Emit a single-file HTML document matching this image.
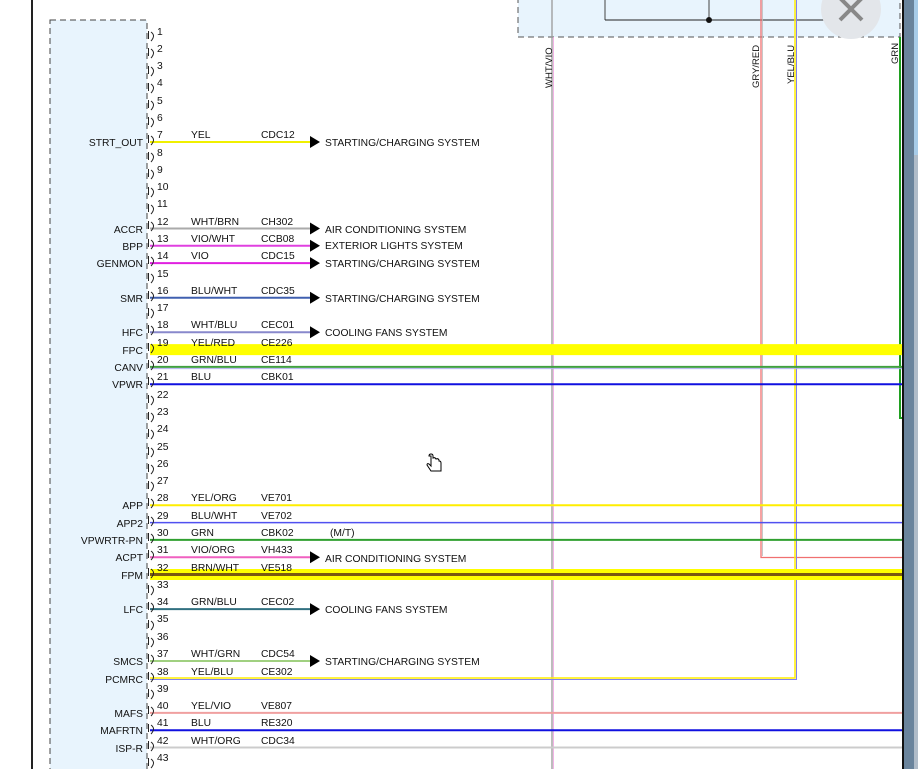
<!DOCTYPE html>
<html><head><meta charset="utf-8"><style>
html,body{margin:0;padding:0;background:#fff;overflow:hidden}
svg{display:block}
text{font-family:"Liberation Sans",sans-serif;font-size:10.3px;fill:#111}
</style></head><body>
<svg width="918" height="769" viewBox="0 0 918 769" xmlns="http://www.w3.org/2000/svg">
<rect x="0" y="0" width="918" height="769" fill="#fff"/>
<rect x="31" y="0" width="2" height="769" fill="#222"/>
<rect x="50" y="20" width="97" height="760" fill="#e8f4fd" stroke="#444" stroke-dasharray="6,4"/>
<rect x="518" y="-5" width="382" height="42" fill="#e8f4fd" stroke="#555" stroke-dasharray="6,4"/>
<line x1="605" y1="0" x2="605" y2="20" stroke="#444"/>
<line x1="605" y1="20" x2="848" y2="20" stroke="#222"/>
<line x1="709" y1="0" x2="709" y2="20" stroke="#444"/>
<circle cx="709" cy="20" r="3" fill="#111"/>
<circle cx="851" cy="9" r="30" fill="#e3e6ea"/>
<path d="M840 -2 L862 20 M862 -2 L840 20" stroke="#888" stroke-width="4"/>
<line x1="552" y1="0" x2="552" y2="769" stroke="#999" stroke-width="1.3"/>
<line x1="553.5" y1="37" x2="553.5" y2="769" stroke="#f0a0e0" stroke-width="0.8"/>
<polyline points="761,0 761,557.5 902,557.5" fill="none" stroke="#f07070" stroke-width="1.3"/>
<polyline points="762.5,0 762.5,556" fill="none" stroke="#bbb" stroke-width="0.8"/>
<polyline points="795,0 795,678 150,678" fill="none" stroke="#ffee00" stroke-width="1.5"/>
<polyline points="796.5,0 796.5,679.5 150,679.5" fill="none" stroke="#8080f0" stroke-width="1"/>
<polyline points="900,37 900,418 902,418" fill="none" stroke="#20a020" stroke-width="2"/>
<text transform="translate(552,88) rotate(-90)" style="font-size:9.5px">WHT/VIO</text>
<text transform="translate(759,88) rotate(-90)" style="font-size:9.5px">GRY/RED</text>
<text transform="translate(794,84) rotate(-90)" style="font-size:9.5px">YEL/BLU</text>
<text transform="translate(898,64) rotate(-90)" style="font-size:9.5px">GRN</text>

<g stroke-width="2" fill="none">
<line x1="150" y1="142" x2="312" y2="142" stroke="#f0f000"/>
<line x1="150" y1="228.5" x2="312" y2="228.5" stroke="#aaa"/>
<line x1="150" y1="245.8" x2="312" y2="245.8" stroke="#e040e0"/>
<line x1="150" y1="263.1" x2="312" y2="263.1" stroke="#e020e0"/>
<line x1="150" y1="297.7" x2="312" y2="297.7" stroke="#4060b0"/>
<line x1="150" y1="332.3" x2="312" y2="332.3" stroke="#8888cc"/>
<line x1="150" y1="349.6" x2="902" y2="349.6" stroke="#ffff00" stroke-width="11"/>
<line x1="150" y1="366.9" x2="902" y2="366.9" stroke="#40a040"/>
<line x1="150" y1="368.6" x2="902" y2="368.6" stroke="#b0b0ee" stroke-width="1"/>
<line x1="150" y1="384.2" x2="902" y2="384.2" stroke="#1010e0"/>
<line x1="150" y1="505.3" x2="902" y2="505.3" stroke="#ffee00"/>
<line x1="150" y1="522.6" x2="902" y2="522.6" stroke="#5050f0" stroke-width="1.5"/>
<line x1="150" y1="539.9" x2="902" y2="539.9" stroke="#30a030"/>
<line x1="150" y1="557.2" x2="312" y2="557.2" stroke="#f060c0"/>
<line x1="150" y1="574.5" x2="902" y2="574.5" stroke="#ffff00" stroke-width="11"/>
<line x1="150" y1="574.5" x2="902" y2="574.5" stroke="#7a5a10" stroke-width="3"/>
<line x1="150" y1="609.1" x2="312" y2="609.1" stroke="#307080"/>
<line x1="150" y1="661" x2="312" y2="661" stroke="#a0d080"/>
<line x1="150" y1="712.9" x2="902" y2="712.9" stroke="#f0a0a0"/>
<line x1="150" y1="730.2" x2="902" y2="730.2" stroke="#1010e0"/>
<line x1="150" y1="747.5" x2="902" y2="747.5" stroke="#ccc"/>
</g>
<g fill="#000">
<path d="M310 136 L320 142 L310 148Z"/>
<path d="M310 222.5 L320 228.5 L310 234.5Z"/>
<path d="M310 239.8 L320 245.8 L310 251.8Z"/>
<path d="M310 257.1 L320 263.1 L310 269.1Z"/>
<path d="M310 291.7 L320 297.7 L310 303.7Z"/>
<path d="M310 326.3 L320 332.3 L310 338.3Z"/>
<path d="M310 551.2 L320 557.2 L310 563.2Z"/>
<path d="M310 603.1 L320 609.1 L310 615.1Z"/>
<path d="M310 655 L320 661 L310 667Z"/>
</g>
<g>
<text x="325" y="146">STARTING/CHARGING SYSTEM</text>
<text x="325" y="233">AIR CONDITIONING SYSTEM</text>
<text x="325" y="249">EXTERIOR LIGHTS SYSTEM</text>
<text x="325" y="267">STARTING/CHARGING SYSTEM</text>
<text x="325" y="302">STARTING/CHARGING SYSTEM</text>
<text x="325" y="336">COOLING FANS SYSTEM</text>
<text x="330" y="536">(M/T)</text>
<text x="325" y="562">AIR CONDITIONING SYSTEM</text>
<text x="325" y="613">COOLING FANS SYSTEM</text>
<text x="325" y="665">STARTING/CHARGING SYSTEM</text>
</g>
<g>
<text x="191" y="138">YEL</text><text x="261" y="138">CDC12</text>
<text x="191" y="225">WHT/BRN</text><text x="261" y="225">CH302</text>
<text x="191" y="242">VIO/WHT</text><text x="261" y="242">CCB08</text>
<text x="191" y="259">VIO</text><text x="261" y="259">CDC15</text>
<text x="191" y="294">BLU/WHT</text><text x="261" y="294">CDC35</text>
<text x="191" y="328">WHT/BLU</text><text x="261" y="328">CEC01</text>
<text x="191" y="346">YEL/RED</text><text x="261" y="346">CE226</text>
<text x="191" y="363">GRN/BLU</text><text x="261" y="363">CE114</text>
<text x="191" y="380">BLU</text><text x="261" y="380">CBK01</text>
<text x="191" y="501">YEL/ORG</text><text x="261" y="501">VE701</text>
<text x="191" y="519">BLU/WHT</text><text x="261" y="519">VE702</text>
<text x="191" y="536">GRN</text><text x="261" y="536">CBK02</text>
<text x="191" y="553">VIO/ORG</text><text x="261" y="553">VH433</text>
<text x="191" y="571">BRN/WHT</text><text x="261" y="571">VE518</text>
<text x="191" y="605">GRN/BLU</text><text x="261" y="605">CEC02</text>
<text x="191" y="657">WHT/GRN</text><text x="261" y="657">CDC54</text>
<text x="191" y="675">YEL/BLU</text><text x="261" y="675">CE302</text>
<text x="191" y="709">YEL/VIO</text><text x="261" y="709">VE807</text>
<text x="191" y="726">BLU</text><text x="261" y="726">RE320</text>
<text x="191" y="744">WHT/ORG</text><text x="261" y="744">CDC34</text>
</g>
<g text-anchor="end">
<text x="143" y="146">STRT_OUT</text>
<text x="143" y="233">ACCR</text>
<text x="143" y="250">BPP</text>
<text x="143" y="267">GENMON</text>
<text x="143" y="302">SMR</text>
<text x="143" y="336">HFC</text>
<text x="143" y="354">FPC</text>
<text x="143" y="371">CANV</text>
<text x="143" y="388">VPWR</text>
<text x="143" y="509">APP</text>
<text x="143" y="527">APP2</text>
<text x="143" y="544">VPWRTR-PN</text>
<text x="143" y="561">ACPT</text>
<text x="143" y="579">FPM</text>
<text x="143" y="613">LFC</text>
<text x="143" y="665">SMCS</text>
<text x="143" y="683">PCMRC</text>
<text x="143" y="717">MAFS</text>
<text x="143" y="734">MAFRTN</text>
<text x="143" y="752">ISP-R</text>
</g>
<g>
<text x="157" y="35">1</text><text x="157" y="52">2</text><text x="157" y="69">3</text><text x="157" y="86">4</text><text x="157" y="104">5</text><text x="157" y="121">6</text><text x="157" y="138">7</text><text x="157" y="156">8</text><text x="157" y="173">9</text><text x="157" y="190">10</text><text x="157" y="207">11</text><text x="157" y="225">12</text><text x="157" y="242">13</text><text x="157" y="259">14</text><text x="157" y="277">15</text><text x="157" y="294">16</text><text x="157" y="311">17</text><text x="157" y="328">18</text><text x="157" y="346">19</text><text x="157" y="363">20</text><text x="157" y="380">21</text><text x="157" y="398">22</text><text x="157" y="415">23</text><text x="157" y="432">24</text><text x="157" y="450">25</text><text x="157" y="467">26</text><text x="157" y="484">27</text><text x="157" y="501">28</text><text x="157" y="519">29</text><text x="157" y="536">30</text><text x="157" y="553">31</text><text x="157" y="571">32</text><text x="157" y="588">33</text><text x="157" y="605">34</text><text x="157" y="622">35</text><text x="157" y="640">36</text><text x="157" y="657">37</text><text x="157" y="675">38</text><text x="157" y="692">39</text><text x="157" y="709">40</text><text x="157" y="726">41</text><text x="157" y="744">42</text><text x="157" y="761">43</text>
</g>
<path fill="none" stroke="#222" stroke-width="1" d="
M148.5 31v8 M151 32q5 3.5 0 9
M148.5 48v8 M151 49q5 3.5 0 9
M148.5 66v8 M151 67q5 3.5 0 9
M148.5 83v8 M151 84q5 3.5 0 9
M148.5 100v8 M151 101q5 3.5 0 9
M148.5 117v8 M151 118q5 3.5 0 9
M148.5 135v8 M151 136q5 3.5 0 9
M148.5 152v8 M151 153q5 3.5 0 9
M148.5 169v8 M151 170q5 3.5 0 9
M148.5 187v8 M151 188q5 3.5 0 9
M148.5 204v8 M151 205q5 3.5 0 9
M148.5 221v8 M151 222q5 3.5 0 9
M148.5 239v8 M151 240q5 3.5 0 9
M148.5 256v8 M151 257q5 3.5 0 9
M148.5 273v8 M151 274q5 3.5 0 9
M148.5 291v8 M151 292q5 3.5 0 9
M148.5 308v8 M151 309q5 3.5 0 9
M148.5 325v8 M151 326q5 3.5 0 9
M148.5 343v8 M151 344q5 3.5 0 9
M148.5 360v8 M151 361q5 3.5 0 9
M148.5 377v8 M151 378q5 3.5 0 9
M148.5 395v8 M151 396q5 3.5 0 9
M148.5 412v8 M151 413q5 3.5 0 9
M148.5 429v8 M151 430q5 3.5 0 9
M148.5 447v8 M151 448q5 3.5 0 9
M148.5 464v8 M151 465q5 3.5 0 9
M148.5 481v8 M151 482q5 3.5 0 9
M148.5 498v8 M151 499q5 3.5 0 9
M148.5 516v8 M151 517q5 3.5 0 9
M148.5 533v8 M151 534q5 3.5 0 9
M148.5 550v8 M151 551q5 3.5 0 9
M148.5 568v8 M151 569q5 3.5 0 9
M148.5 585v8 M151 586q5 3.5 0 9
M148.5 602v8 M151 603q5 3.5 0 9
M148.5 620v8 M151 621q5 3.5 0 9
M148.5 637v8 M151 638q5 3.5 0 9
M148.5 654v8 M151 655q5 3.5 0 9
M148.5 672v8 M151 673q5 3.5 0 9
M148.5 689v8 M151 690q5 3.5 0 9
M148.5 706v8 M151 707q5 3.5 0 9
M148.5 724v8 M151 725q5 3.5 0 9
M148.5 741v8 M151 742q5 3.5 0 9
M148.5 758v8 M151 759q5 3.5 0 9"/>
<path d="M431 456v10l-2-2q-2-1-2 1l4 6h10v-8q0-2-2-2v-1q-1-2-3-1q-1-2-3-1v-2q0-2-2-2q-2 0-2 2z" fill="#fff" stroke="#000" stroke-width="1"/>
<rect x="902" y="0" width="2" height="769" fill="#111"/>
<rect x="904" y="0" width="10" height="769" fill="#6a849c"/>
<rect x="914" y="0" width="4" height="155" fill="#a8cce8"/>
<rect x="914" y="155" width="4" height="614" fill="#b0bcc8"/>
</svg>
</body></html>
